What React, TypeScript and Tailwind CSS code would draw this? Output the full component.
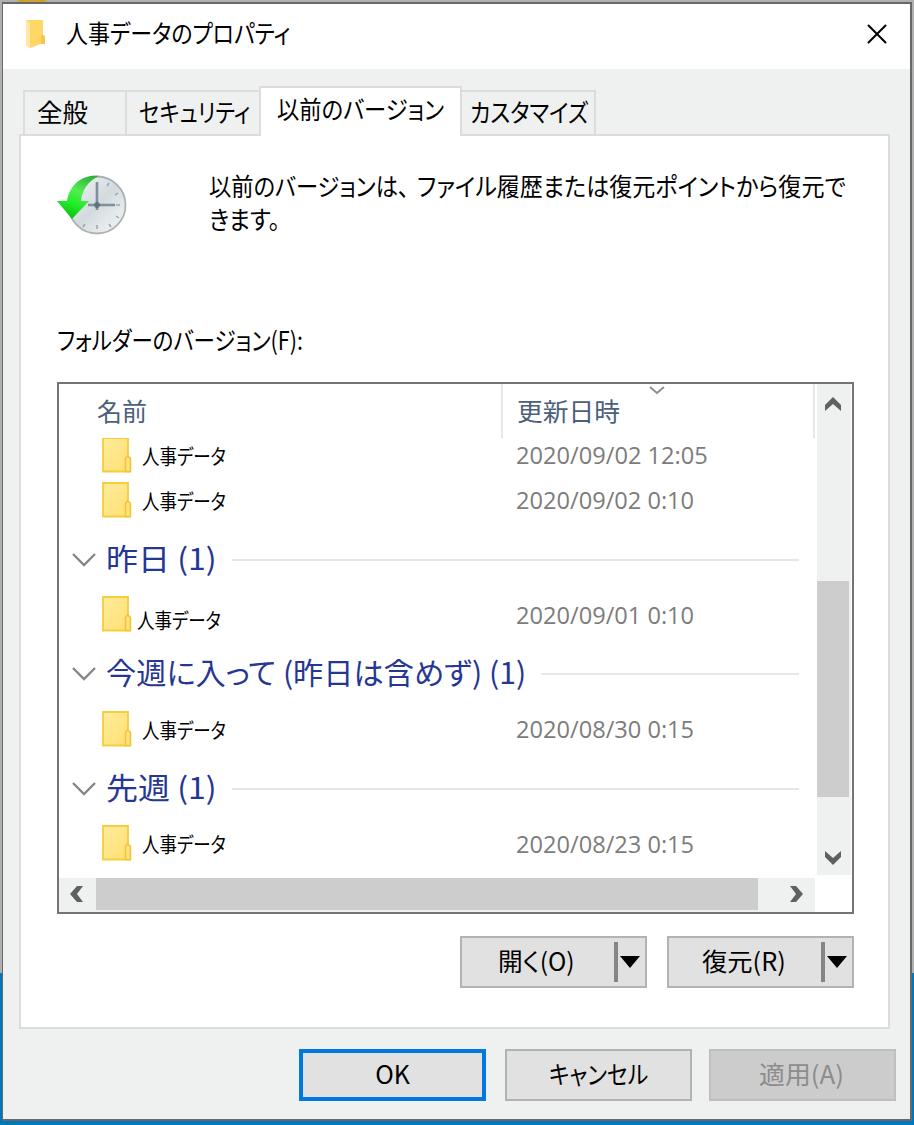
import { useLayoutEffect, useRef, useState } from 'react'
import { X } from 'lucide-react'

type Version = { name: string; date: string; shifted?: boolean }
type Group = { label: string; labelWidth: number; items: Version[] }

const TODAY: Version[] = [
  { name: '人事データ', date: '2020/09/02 12:05' },
  { name: '人事データ', date: '2020/09/02 0:10' },
]

const GROUPS: Group[] = [
  { label: '昨日 (1)', labelWidth: 111, items: [{ name: '人事データ', date: '2020/09/01 0:10', shifted: true }] },
  { label: '今週に入って (昨日は含めず) (1)', labelWidth: 420, items: [{ name: '人事データ', date: '2020/08/30 0:15' }] },
  { label: '先週 (1)', labelWidth: 111, items: [{ name: '人事データ', date: '2020/08/23 0:15' }] },
]

// Squeezes a single line of text to a given width, like the condensed UI kana
function Fit({ text, width, className = '' }: { text: string; width: number; className?: string }) {
  const ref = useRef<HTMLSpanElement>(null)
  const [scale, setScale] = useState(1)

  useLayoutEffect(() => {
    if (ref.current) setScale(width / ref.current.offsetWidth)
  }, [width, text])

  return (
    <span className={`block shrink-0 whitespace-nowrap ${className}`} style={{ width }}>
      <span ref={ref} className="inline-block origin-left" style={{ transform: `scaleX(${scale})` }}>
        {text}
      </span>
    </span>
  )
}

function TitleFolder() {
  return (
    <svg width="22" height="30" viewBox="0 0 22 30" className="shrink-0">
      <path d="M1 1h17v15l2 2v7h-4L5 29 1 26z" fill="#ffd766" />
      <path d="M1 1l4 3v25l-4-3z" fill="#ffe9a3" />
      <path d="M16 16h3l1 2v7h-4z" fill="#f5c74f" />
    </svg>
  )
}

function FolderIcon() {
  return (
    <svg width="30" height="36" viewBox="0 0 30 36" className="shrink-0">
      <defs>
        <linearGradient id="folder" x1="0" y1="0" x2="1" y2="1">
          <stop offset="0" stopColor="#ffeb9c" />
          <stop offset="1" stopColor="#ffe070" />
        </linearGradient>
      </defs>
      <path d="M1 1h25v18.500l2.200 2v13H1z" fill="url(#folder)" stroke="#f6cd3c" strokeWidth="1.8" />
      <path d="M23.500 34.500V21.500l2-2.500 2.900 2.500v13z" fill="#ffe38a" stroke="#f3c62f" strokeWidth="1.600" />
    </svg>
  )
}

function HistoryIcon() {
  return (
    <svg width="72" height="64" viewBox="0 0 72 64">
      <defs>
        <linearGradient id="face" x1="0" y1="0" x2="1" y2="1">
          <stop offset="0" stopColor="#f4f6f8" />
          <stop offset="0.5" stopColor="#d3dade" />
          <stop offset="1" stopColor="#f7f9fa" />
        </linearGradient>
        <linearGradient id="arrow" x1="0.8" y1="0" x2="0.4" y2="1">
          <stop offset="0" stopColor="#2fae3c" />
          <stop offset="0.4" stopColor="#52ee52" />
          <stop offset="0.7" stopColor="#1fee26" />
          <stop offset="1" stopColor="#0fc015" />
        </linearGradient>
      </defs>
      <circle cx="40" cy="32" r="28.500" fill="url(#face)" stroke="#abb1b5" strokeWidth="1.800" />
      <g stroke="#9aa5ad" strokeWidth="1.500">
        <path d="M40 52v4M52 51l2 3M59 43l3 2M61 20l-3 2M52 10l-2 3M28 51l-2 3M59 32h4" />
      </g>
      <path d="M40 9v28M31 32h27" stroke="#7d909c" strokeWidth="2.600" fill="none" />
      <path d="M37 32h6M40 29v6" stroke="#5d717e" strokeWidth="3" />
      <path d="M42 3C27 1 13 10 10 28H0l15 18 17-18h-8C25 17 31 8 42 3z" fill="url(#arrow)" />
    </svg>
  )
}

function VersionRow({ item }: { item: Version }) {
  return (
    <div className="flex h-[45px] items-center pl-[43px]">
      <FolderIcon />
      <Fit
        text={item.name}
        width={84}
        className={`text-[21px] text-black ${item.shifted ? 'ml-[5px] mr-[295px] pt-[11px]' : 'ml-[10px] mr-[290px] pt-px'}`}
      />
      <Fit
        text={item.date}
        width={item.date.length === 16 ? 192 : 178}
        className="pt-px font-['Open_Sans'] text-[24px] text-[#7c7c7c]"
      />
    </div>
  )
}

function SplitButton({ text, width }: { text: string; width: number }) {
  return (
    <button className="flex h-[52px] w-[187px] items-center border-2 border-[#b2b2b2] bg-[#e1e1e1] text-[25px]">
      <span className="flex flex-1 justify-center pb-1 pr-1">
        <Fit text={text} width={width} />
      </span>
      <span className="h-10 w-1 bg-[#858585]" />
      <svg width="20" height="12" viewBox="0 0 20 12" className="ml-0.5 mr-[5px]">
        <path d="M0 0h20L10 12z" fill="#000" />
      </svg>
    </button>
  )
}

export default function App() {
  return (
    <div className="relative h-[1125px] w-[914px] overflow-hidden bg-[linear-gradient(#b0b0b0_973px,#0077bd_973px)] pl-0.5 pt-0.5 font-['Noto_Sans_CJK_JP','Noto_Sans',sans-serif] leading-none text-black [font-feature-settings:'palt']">
      <div className="absolute left-[18px] top-0 h-0.5 w-7 bg-[#c9a227]" />

      <div className="flex h-[1119px] w-[910px] flex-col border-2 border-l border-[#686868] bg-[#eff0f0]">
        {/* Title bar */}
        <div className="flex h-[65px] shrink-0 items-center bg-white pb-[5px] pl-[22px] pr-[16px]">
          <TitleFolder />
          <Fit text="人事データのプロパティ" width={224} className="ml-[19px] pb-1 text-[25px]" />
          <X size={34} strokeWidth={1.4} className="ml-auto" />
        </div>

        {/* Tabs */}
        <div className="relative z-10 -mb-0.5 flex h-[67px] shrink-0 items-end pl-5 text-[25px]">
          <div className="flex h-[46px] w-[102px] items-center border-2 border-r-0 border-[#dcdcdc] pb-[3px] pl-3">
            <Fit text="全般" width={51} />
          </div>
          <div className="flex h-[46px] w-[134px] items-center border-2 border-r-0 border-[#dcdcdc] pb-[3px] pl-3">
            <Fit text="セキュリティ" width={111} />
          </div>
          <div className="flex h-[50px] w-[203px] items-center border-2 border-b-0 border-[#dcdcdc] bg-white pb-2 pl-4">
            <Fit text="以前のバージョン" width={167} />
          </div>
          <div className="flex h-[46px] w-[134px] items-center border-2 border-l-0 border-[#dcdcdc] pb-[3px] pl-2">
            <Fit text="カスタマイズ" width={118} />
          </div>
        </div>

        {/* Tab page */}
        <div className="ml-4 flex h-[895px] w-[871px] shrink-0 flex-col border-2 border-[#dcdcdc] bg-white pl-9 pr-[34px]">
          <div className="flex h-[189px] shrink-0 pt-[33px]">
            <div className="pt-1">
              <HistoryIcon />
            </div>
            <div className="ml-[80px] text-[24.500px] leading-[33px]">
              <div className="flex gap-2">
                <Fit text="以前のバージョンは、" width={200} />
                <Fit text="ファイル履歴または復元ポイントから復元で" width={429} />
              </div>
              <Fit text="きます。" width={71} />
            </div>
          </div>
          <Fit text="フォルダーのバージョン(F):" width={246} className="h-[57px] pt-0.5 text-[25px]" />

          {/* Version list */}
          <div className="flex h-[532px] w-[797px] shrink-0 flex-col border-2 border-[#747474]">
            <div className="flex h-[491px]">
              <div className="relative flex-1">
                <div className="flex h-[54px] text-[25px] text-[#4c607a]">
                  <div className="w-[444px] border-r-2 border-[#e8e8e8] pl-[38px] pt-[14px]">
                    <Fit text="名前" width={50} />
                  </div>
                  <div className="w-[312px] border-r-2 border-[#e8e8e8] pl-[14px] pt-[14px]">
                    <Fit text="更新日時" width={103} />
                  </div>
                </div>
                <svg width="16" height="9" viewBox="0 0 16 9" className="absolute left-[590px] top-[2px]">
                  <path d="M1 1l7 6 7-6" fill="none" stroke="#8a8a8a" strokeWidth="1.8" />
                </svg>

                <div className="h-[437px] overflow-hidden">
                  <div className="-mt-1.5">
                    {TODAY.map(item => (
                      <VersionRow key={item.date} item={item} />
                    ))}
                    {GROUPS.map(group => (
                      <div key={group.label}>
                        <div className="flex h-[69.500px] items-center pl-[13px] pr-[18px] pt-1.5">
                          <svg width="24" height="14" viewBox="0 0 24 14" className="shrink-0">
                            <path d="M1 1l11 11L23 1" fill="none" stroke="#868686" strokeWidth="2.400" />
                          </svg>
                          <Fit text={group.label} width={group.labelWidth} className="ml-[10px] pb-[6px] text-[30px] text-[#263793]" />
                          <div className="ml-[15px] h-0.5 flex-1 bg-[#e6e6e6]" />
                        </div>
                        {group.items.map(item => (
                          <VersionRow key={item.date} item={item} />
                        ))}
                      </div>
                    ))}
                  </div>
                </div>
              </div>

              {/* Vertical scrollbar */}
              <div className="mr-px flex w-[34px] shrink-0 flex-col items-center bg-[#eff0f0]">
                <svg width="16" height="14" viewBox="0 0 16 14" className="mb-[170px] mr-0.5 mt-[13px]">
                  <path d="M0 8L8 0l8 8v6l-8-7-8 7z" fill="#606060" />
                </svg>
                <div className="mr-0.5 h-[216px] w-8 bg-[#cdcdcd]" />
                <svg width="16" height="14" viewBox="0 0 16 14" className="mr-0.5 mt-[54px]">
                  <path d="M0 0v6l8 8 8-8V0L8 7z" fill="#606060" />
                </svg>
              </div>
            </div>

            {/* Horizontal scrollbar */}
            <div className="mt-[3px] flex h-[34px] w-[756px] items-center bg-[#eff0f0]">
              <svg width="13" height="16" viewBox="0 0 13 16" className="mb-0.5 ml-[11px]">
                <path d="M7 0L0 8l7 8h6L7 8l6-8z" fill="#606060" />
              </svg>
              <div className="mb-0.5 ml-[13px] h-8 w-[662px] bg-[#cdcdcd]" />
              <svg width="13" height="16" viewBox="0 0 13 16" className="mb-0.5 ml-[32px]">
                <path d="M0 0l6 8-6 8h6l7-8-7-8z" fill="#606060" />
              </svg>
            </div>
          </div>

          <div className="mt-[22px] flex w-[797px] justify-end gap-5">
            <SplitButton text="開く(O)" width={77} />
            <SplitButton text="復元(R)" width={84} />
          </div>
        </div>

        {/* Dialog buttons */}
        <div className="mt-5 flex pl-[296px] text-[25px]">
          <button className="flex h-[52px] w-[187px] items-center justify-center border-4 border-[#0078e0] bg-[#e1e1e1] pb-1">
            <Fit text="OK" width={35} />
          </button>
          <button className="ml-[19px] flex h-[52px] w-[187px] items-center justify-center border-2 border-[#b2b2b2] bg-[#e1e1e1] pb-1">
            <Fit text="キャンセル" width={99} />
          </button>
          <button disabled className="ml-[17px] flex h-[52px] w-[187px] items-center justify-center border-2 border-[#bfbfbf] bg-[#ccc] pb-1 pr-1 text-[#8c8c8c]">
            <Fit text="適用(A)" width={85} />
          </button>
        </div>
      </div>
    </div>
  )
}
